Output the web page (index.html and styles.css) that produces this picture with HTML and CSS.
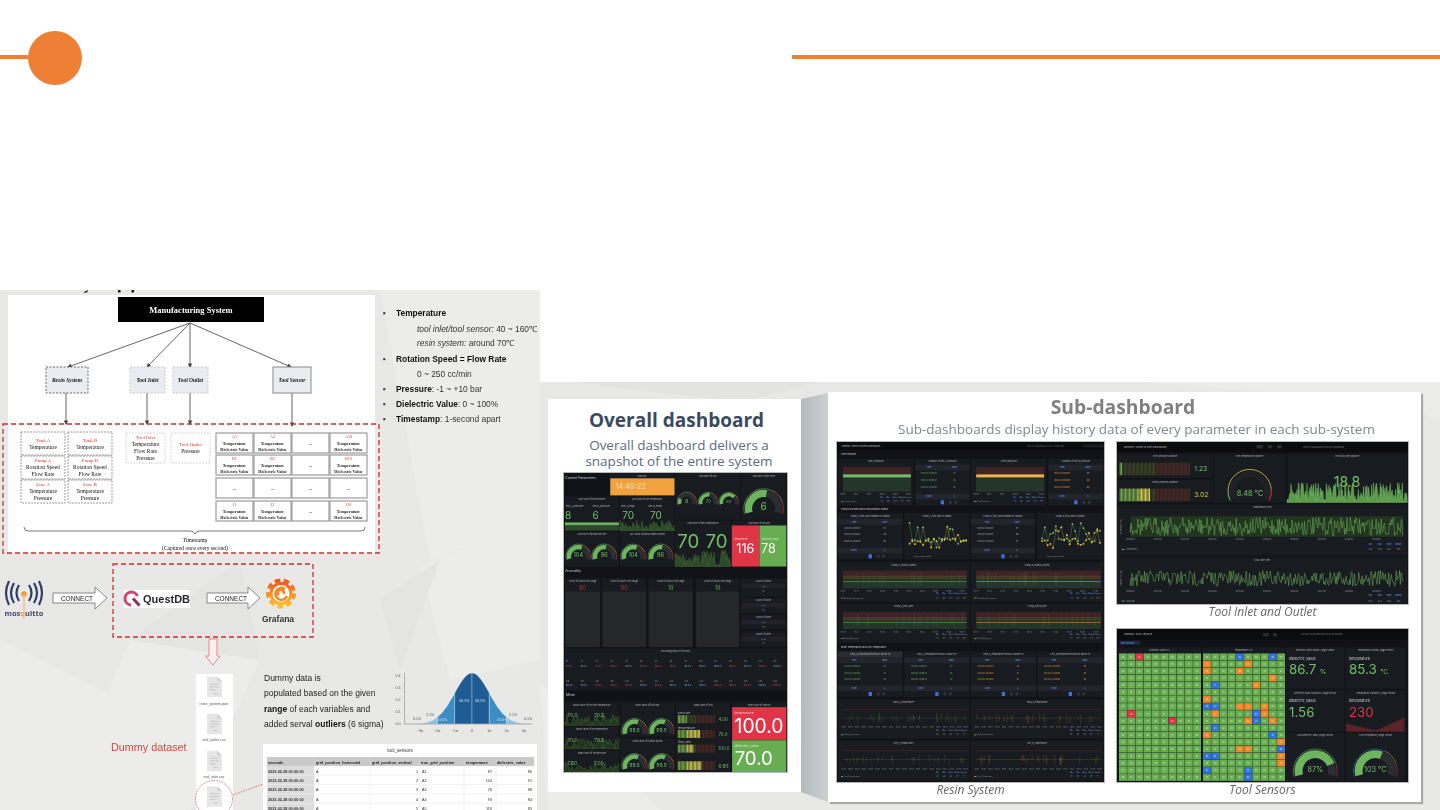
FILE: index.html
```html
<!DOCTYPE html>
<html lang="en">
<head>
  <meta charset="UTF-8">
  <meta name="viewport" content="width=device-width, initial-scale=1.0">
  <title>Dashboards</title>
  <link rel="stylesheet" href="styles.css">
</head>
<body>
  <div class="slide">
    <header class="rule">
      <span class="rule-left"></span>
      <span class="dot"></span>
      <span class="rule-right"></span>
    </header>

    <main class="content">
      <!-- left picture: data flow diagram -->
      <svg class="flow" viewBox="0 284 540 526" xmlns="http://www.w3.org/2000/svg">
        <defs>
          <linearGradient id="grafana" x1="0" y1="1" x2="0" y2="0">
            <stop offset="0" stop-color="#fbc02d"/>
            <stop offset="1" stop-color="#ef5b25"/>
          </linearGradient>
          <marker id="tip" markerWidth="5" markerHeight="5" refX="4" refY="2.5" orient="auto">
            <path d="M0 0 L5 2.5 L0 5z" fill="#444"/>
          </marker>
          <symbol id="file" viewBox="0 0 16 22">
            <path d="M0 0 H11 L16 5 V22 H0z" fill="#e6e6e6"/>
            <path d="M11 0 V5 H16z" fill="#cfcfcf"/>
            <path d="M3 8 H12 M3 11 H13 M3 14 H9 M7 18 H11" stroke="#c4c4c4" stroke-width="1"/>
          </symbol>
        </defs>

        <rect x="0" y="290" width="540" height="520" fill="#e8e8e7"/>
        <g fill="#ececeb">
          <polygon points="380,290 540,290 540,520 430,560"/>
          <polygon points="0,640 120,700 60,810 0,810"/>
          <polygon points="130,640 260,660 190,810 60,810"/>
          <polygon points="420,565 540,520 540,660 450,680"/>
        </g>
        <g fill="#e4e4e3">
          <polygon points="380,600 440,560 400,670"/>
          <polygon points="130,640 240,560 260,660"/>
        </g>

        <!-- bits of the heading above that the picture crops away -->
        <path d="M83 292.500 L88 290 L87 292.500z" fill="#111"/>
        <rect x="118" y="290" width="2.500" height="2.500" fill="#111"/>
        <rect x="131.500" y="290" width="2.500" height="2.500" fill="#111"/>

        <rect x="8" y="295" width="367" height="258" fill="#fff"/>

        <rect x="118" y="297" width="146" height="25" fill="#000"/>
        <text class="serif serif-head" x="191" y="313">Manufacturing System</text>

        <g class="link">
          <line x1="190" y1="323" x2="68" y2="367" marker-end="url(#tip)"/>
          <line x1="190" y1="323" x2="147" y2="367" marker-end="url(#tip)"/>
          <line x1="190" y1="323" x2="190" y2="367" marker-end="url(#tip)"/>
          <line x1="190" y1="323" x2="291" y2="367" marker-end="url(#tip)"/>
          <line x1="66" y1="393" x2="66" y2="424" marker-end="url(#tip)"/>
          <line x1="147" y1="393" x2="147" y2="424" marker-end="url(#tip)"/>
          <line x1="190" y1="393" x2="190" y2="424" marker-end="url(#tip)"/>
          <line x1="292" y1="393" x2="292" y2="426" marker-end="url(#tip)"/>
        </g>

        <rect class="sys sys-dash" x="46" y="367" width="42" height="26"/>
        <rect class="sys sys-soft" x="130" y="367" width="35" height="26"/>
        <rect class="sys sys-soft" x="173" y="367" width="35" height="26"/>
        <rect class="sys sys-solid" x="273" y="367" width="38" height="26"/>
        <text class="serif serif-sys" x="67" y="382">Resin System</text>
        <text class="serif serif-sys" x="147.500" y="382">Tool Inlet</text>
        <text class="serif serif-sys" x="190.500" y="382">Tool Outlet</text>
        <text class="serif serif-sys" x="292" y="382">Tool Sensor</text>

        <g id="resinGrid"></g>
        <g id="toolGrid"></g>
        <g id="sensorGrid"></g>

        <rect class="red-dash" x="3" y="424" width="376" height="129"/>
        <path d="M24 527 Q24 531 28 531 H190 Q194 531 195 534 Q196 531 200 531 H361 Q365 531 365 527" fill="none" stroke="#555" stroke-width="0.8"/>
        <text class="serif serif-cell" x="195" y="542">Timestamp</text>
        <text class="serif serif-cell" x="195" y="550">(Captured once every second)</text>

        <!-- bullets -->
        <g class="bullets">
          <text x="383" y="316">▪</text><text x="396" y="316" class="b">Temperature</text>
          <text x="417" y="332"><tspan class="i">tool inlet/tool sensor:</tspan> 40 ~ 160℃</text>
          <text x="417" y="346"><tspan class="i">resin system:</tspan> around 70℃</text>
          <text x="383" y="362">▪</text><text x="396" y="362" class="b">Rotation Speed = Flow Rate</text>
          <text x="417" y="377">0 ~ 250 cc/min</text>
          <text x="383" y="392">▪</text><text x="396" y="392"><tspan class="b">Pressure</tspan>: -1 ~ +10 bar</text>
          <text x="383" y="407">▪</text><text x="396" y="407"><tspan class="b">Dielectric Value</tspan>: 0 ~ 100%</text>
          <text x="383" y="422">▪</text><text x="396" y="422"><tspan class="b">Timestamp</tspan>: 1-second apart</text>
        </g>

        <!-- broker row -->
        <g class="mq-arcs">
          <path d="M19 585 Q14 593 19 601"/><path d="M14 583 Q8 593 14 603"/><path d="M9 581 Q3 593 9 605"/>
          <path d="M29 585 Q34 593 29 601"/><path d="M34 583 Q40 593 34 603"/><path d="M39 581 Q45 593 39 605"/>
        </g>
        <circle cx="24" cy="594" r="2.800" fill="#f0993e"/>
        <line x1="24" y1="594" x2="24" y2="611" stroke="#f3b57c" stroke-width="1.200"/>
        <text class="mq-text" x="24" y="616">mos<tspan fill="#f0993e">q</tspan>uitto</text>

        <polygon class="arrow" points="53,593 95,593 95,587 107,598 95,609 95,603 53,603"/>
        <text class="connect" x="77" y="601">CONNECT</text>
        <polygon class="arrow" points="207,593 248,593 248,587 260,598 248,609 248,603 207,603"/>
        <text class="connect" x="231" y="601">CONNECT</text>

        <rect class="red-dash" x="113" y="564" width="200" height="73"/>
        <rect x="124" y="590" width="66" height="18" fill="#fff"/>
        <path d="M137.500 596 A6.500 6.500 0 1 0 131 605" fill="none" stroke="#d14671" stroke-width="3"/>
        <path d="M133 598.500 L139.500 605.500" fill="none" stroke="#8a3355" stroke-width="3"/>
        <text class="quest" x="143" y="603">QuestDB</text>

        <!-- grafana mark: toothed ring with a white swirl -->
        <circle cx="281" cy="593.500" r="11.500" fill="url(#grafana)"/>
        <circle class="gear-teeth" cx="281" cy="593.500" r="12.500"/>
        <circle cx="281" cy="593.500" r="8.500" fill="#fff"/>
        <path d="M287 596 A6 6 0 1 1 285 589 M279 595 A3 3 0 1 1 283.500 594" fill="none" stroke="#f58a1f" stroke-width="2.600"/>
        <text class="grafana" x="278" y="622">Grafana</text>

        <polygon class="down" points="209,639 217,639 217,656 220,656 213,665 205.500,656 209,656"/>

        <!-- dummy data -->
        <text class="dataset" x="111" y="751">Dummy dataset</text>

        <rect x="196" y="674" width="37" height="136" fill="#fff"/>
        <use href="#file" x="207" y="676" width="15" height="22"/>
        <use href="#file" x="207" y="713" width="15" height="22"/>
        <use href="#file" x="207" y="750" width="15" height="22"/>
        <use href="#file" x="207" y="786" width="15" height="21"/>
        <g class="file-label">
          <text x="214" y="705">resin_system.json</text>
          <text x="214" y="741">tool_outlet.csv</text>
          <text x="214" y="778">tool_inlet.csv</text>
        </g>
        <circle cx="214" cy="799" r="18.500" class="pick"/>
        <path d="M233 795 L263 784" class="pick"/>

        <g class="note">
          <text x="264" y="681">Dummy data is</text>
          <text x="264" y="696">populated based on the given</text>
          <text x="264" y="712"><tspan class="b">range</tspan> of each variables and</text>
          <text x="264" y="727">added serval <tspan class="b">outliers</tspan> (6 sigma)</text>
        </g>

        <g id="bell"></g>
        <g id="sensorTable"></g>
      </svg>

      <!-- right picture: dashboards -->
      <section class="boards">
        <svg class="boards-bg" viewBox="0 0 900 428" preserveAspectRatio="none">
          <polygon points="0,0 900,0 900,428 0,428" fill="#e8e8e7"/>
          <polygon points="30,0 280,0 200,20" fill="#e3e3e2"/>
          <polygon points="600,0 900,0 900,40 860,20" fill="#ececeb"/>
          <polygon points="0,300 8,428 120,428" fill="#ececeb"/>
        </svg>

        <article class="card card-overall">
          <h2 class="overall-title">Overall dashboard</h2>
          <p class="overall-sub">Overall dashboard delivers a<br>snapshot of the entire system</p>
          <svg id="overall" class="shot shot-overall" viewBox="72 265 670 895" preserveAspectRatio="none"></svg>
        </article>

        <svg class="fold" viewBox="0 0 27 410" preserveAspectRatio="none">
          <defs>
            <linearGradient id="foldFill" x1="0" x2="1">
              <stop offset="0" stop-color="#b3b9bc"/>
              <stop offset="1" stop-color="#ccd0d2"/>
            </linearGradient>
          </defs>
          <polygon points="0,7 27,1 27,410 0,400" fill="url(#foldFill)"/>
        </svg>

        <article class="card card-sub">
          <h2 class="sub-title">Sub-dashboard</h2>
          <p class="sub-text">Sub-dashboards display history data of every parameter in each sub-system</p>
          <div class="sub-grid">
            <figure class="shot-col">
              <svg id="resin" class="shot shot-resin" viewBox="20 170 802 1020" preserveAspectRatio="none"></svg>
              <figcaption>Resin System</figcaption>
            </figure>
            <div class="stack">
              <figure class="shot-col">
                <svg id="inlet" class="shot shot-inlet" viewBox="22 170 873 487" preserveAspectRatio="none"></svg>
                <figcaption>Tool Inlet and Outlet</figcaption>
              </figure>
              <figure class="shot-col">
                <svg id="sensors" class="shot shot-sensors" viewBox="22 733 873 457" preserveAspectRatio="none"></svg>
                <figcaption>Tool Sensors</figcaption>
              </figure>
            </div>
          </div>
        </article>
      </section>
    </main>
  </div>

  <script src="script.js"></script>
</body>
</html>
```

FILE: styles.css
```css
html, body {
  margin: 0;
  padding: 0;
  background: #fff;
}
.slide {
  width: 1440px;
  height: 810px;
  overflow: hidden;
  font-family: 'Open Sans', sans-serif;
}
.rule {
  display: flex;
  align-items: center;
  height: 116px;
}
.rule-left {
  width: 28px;
  height: 4px;
  margin-bottom: 2px;
  background: #ed8034;
}
.dot {
  width: 54px;
  height: 54px;
  border-radius: 50%;
  background: #ed8034;
}
.rule-right {
  width: 648px;
  height: 4px;
  margin-bottom: 2px;
  margin-left: auto;
  background: #ed8034;
}
.content {
  display: grid;
  grid-template-columns: 540px 900px;
  height: 694px;
}

/* left picture */
.flow {
  display: block;
  width: 540px;
  height: 526px;
  margin-top: 168px;
  filter: blur(0.55px);
}
.flow text {
  font-family: 'Liberation Sans', sans-serif;
}
.flow .serif {
  font-family: 'Liberation Serif', serif;
  text-anchor: middle;
}
.serif-head {
  font-size: 8.5px;
  font-weight: bold;
  fill: #fff;
}
.serif-sys {
  font-size: 5.5px;
  font-style: italic;
  font-weight: bold;
  fill: #111;
}
.serif-cell {
  font-size: 5.5px;
  fill: #111;
}
.serif-red {
  font-size: 5px;
  fill: #d9342b;
}
.serif-tiny {
  font-size: 4.2px;
  font-weight: bold;
  fill: #222;
}
.serif-tiny-red {
  font-size: 4.2px;
  fill: #d9342b;
}
.link line {
  stroke: #555;
  stroke-width: 0.9;
}
.sys {
  fill: #e9edf2;
  stroke-width: 1;
}
.sys-dash {
  stroke: #666;
  stroke-dasharray: 2 1.500;
}
.sys-soft {
  stroke: #c5c5c5;
  stroke-dasharray: 2 1.500;
}
.sys-solid {
  stroke: #8a8a8a;
}
.cell-dash {
  fill: #fff;
  stroke: #777;
  stroke-width: 0.8;
  stroke-dasharray: 1.800 1.200;
}
.cell-soft {
  fill: #fff;
  stroke: #c8c8c8;
  stroke-width: 0.8;
  stroke-dasharray: 1.800 1.200;
}
.cell-solid {
  fill: #fff;
  stroke: #9b9b9b;
  stroke-width: 1.200;
}
.red-dash {
  fill: none;
  stroke: #c9302c;
  stroke-width: 1.300;
  stroke-dasharray: 5 3;
}
.bullets text {
  font-size: 8.4px;
  fill: #333;
}
.bullets .b {
  font-weight: bold;
  fill: #111;
}
.bullets .i {
  font-style: italic;
}
.mq-arcs path {
  fill: none;
  stroke: #2f3d63;
  stroke-width: 2.200;
}
.flow .mq-text {
  font-family: 'Open Sans', sans-serif;
  font-size: 7.5px;
  font-weight: bold;
  fill: #3c4a6e;
  text-anchor: middle;
}
.arrow {
  fill: #fff;
  stroke: #7a7a7a;
  stroke-width: 0.9;
}
.connect {
  font-size: 6.5px;
  fill: #222;
  text-anchor: middle;
}
.quest {
  font-size: 11px;
  font-weight: bold;
  fill: #26262e;
}
.gear-teeth {
  fill: none;
  stroke: url(#grafana);
  stroke-width: 5;
  stroke-dasharray: 5.500 3.230;
}
.grafana {
  font-size: 8.5px;
  font-weight: bold;
  fill: #333;
  text-anchor: middle;
}
.down {
  fill: #fbeeee;
  stroke: #e08a85;
  stroke-width: 1;
}
.dataset {
  font-size: 10.8px;
  fill: #d9453f;
}
.file-label text {
  font-size: 3.6px;
  fill: #555;
  text-anchor: middle;
}
.pick {
  fill: none;
  stroke: #d9534f;
  stroke-width: 0.8;
  stroke-dasharray: 1.500 1.200;
}
.note text {
  font-size: 8.5px;
  fill: #222;
}
.note .b {
  font-weight: bold;
  fill: #111;
}
.tb-title {
  font-size: 4.5px;
  fill: #333;
  text-anchor: middle;
}
.tb-head {
  font-size: 3.8px;
  font-weight: bold;
  fill: #222;
}
.tb-cell {
  font-size: 3.8px;
  fill: #333;
}
.tb-date {
  font-size: 3.8px;
  font-weight: bold;
  fill: #333;
}
.tb-num {
  text-anchor: end;
}
.bell-text {
  font-size: 3.6px;
  fill: #555;
  text-anchor: middle;
}
.bell-pct {
  font-size: 3.6px;
  fill: #cfe4f3;
  text-anchor: middle;
}

/* right picture */
.boards {
  position: relative;
  display: flex;
  align-items: flex-start;
  height: 428px;
  margin-top: 266px;
  padding: 10px 0 0 8px;
  box-sizing: border-box;
  filter: blur(0.5px);
}
.boards-bg {
  position: absolute;
  top: 0;
  left: 0;
  width: 100%;
  height: 100%;
}
.card {
  position: relative;
  background: #fff;
  box-sizing: border-box;
}
.card-overall {
  width: 253px;
  height: 393px;
  margin-top: 7px;
  padding: 8px 16px 0 16px;
  text-align: center;
}
.overall-title {
  margin: 0 0 0 4px;
  font-size: 19px;
  line-height: 26px;
  font-weight: bold;
  color: #3b4a5f;
}
.overall-sub {
  margin: 4px -13px 4px -4px;
  font-size: 13.5px;
  line-height: 16px;
  color: #5b6b7d;
}
.fold {
  position: relative;
  width: 27px;
  height: 410px;
  flex: none;
}
.card-sub {
  width: 593px;
  height: 410px;
  padding: 2px 0 0 9px;
  box-shadow: 2px 2px 1px #a9a9a9;
  text-align: center;
}
.sub-title {
  margin: 0 12px 0 0;
  font-size: 19.3px;
  line-height: 25px;
  font-weight: bold;
  color: #808080;
}
.sub-text {
  margin: 0 0 3px 15px;
  font-size: 13.5px;
  line-height: 20px;
  color: #7d8890;
}
.sub-grid {
  display: flex;
  gap: 13px;
}
.stack {
  display: flex;
  flex-direction: column;
  gap: 9px;
}
.shot-col {
  margin: 0;
}
.shot-col figcaption {
  font-size: 12px;
  line-height: 16px;
  font-style: italic;
  color: #666;
}
.shot {
  display: block;
  filter: blur(0.4px);
  outline: 1px solid #b5b5b5;
}
.shot-overall {
  width: 223px;
  height: 299px;
}
.shot-resin {
  width: 267px;
  height: 340px;
}
.shot-inlet {
  width: 291px;
  height: 162px;
}
.shot-sensors {
  width: 291px;
  height: 153px;
}
.shot text {
  font-family: Inter, sans-serif;
}
```

FILE: script.js
```js
// builds the dashboard mock-ups and repeated diagram parts from small data tables
let seed = 7;
function rnd() {
  seed = (seed * 16807) % 2147483647;
  return seed / 2147483647;
}

function box(x, y, w, h, fill, op) {
  return `<rect x="${x}" y="${y}" width="${w}" height="${h}" fill="${fill}"${op ? ` opacity="${op}"` : ''}/>`;
}
function txt(x, y, t, size, fill, anchor, weight) {
  return `<text x="${x}" y="${y}" font-size="${size}" fill="${fill}" text-anchor="${anchor || 'start'}"${weight ? ` font-weight="${weight}"` : ''}>${t}</text>`;
}
function panel(x0, y0, x1, y1, title) {
  let s = box(x0, y0, x1 - x0, y1 - y0, '#181b1f');
  if (title) s += txt((x0 + x1) / 2, y0 + 11, title, 6.5, '#b8b8c4', 'middle');
  return s;
}
function wave(x, y, w, h, step, fill, stroke, width) {
  let d = fill !== 'none' ? `M${x} ${y + h}` : `M${x} ${y + h / 2}`;
  for (let px = x; px <= x + w; px += step) {
    d += ` L${px} ${(y + rnd() * h).toFixed(1)}`;
  }
  if (fill !== 'none') d += ` L${x + w} ${y + h}z`;
  return `<path d="${d}" fill="${fill}" stroke="${stroke}" stroke-width="${width || 1}"/>`;
}
function arc(cx, cy, r, a0, a1, color, width) {
  const rad = a => a * Math.PI / 180;
  const x0 = cx + r * Math.sin(rad(a0)), y0 = cy - r * Math.cos(rad(a0));
  const x1 = cx + r * Math.sin(rad(a1)), y1 = cy - r * Math.cos(rad(a1));
  const big = a1 - a0 > 180 ? 1 : 0;
  return `<path d="M${x0.toFixed(1)} ${y0.toFixed(1)} A${r} ${r} 0 ${big} 1 ${x1.toFixed(1)} ${y1.toFixed(1)}" fill="none" stroke="${color}" stroke-width="${width}"/>`;
}
function gauge(cx, cy, r, val, label, size, colors) {
  const c = colors || ['#73bf69', '#f2a23c', '#e02f44'];
  const end = -105 + 210 * val;
  let s = arc(cx, cy, r, -105, 25, c[0], 1.6);
  s += arc(cx, cy, r, 25, 70, c[1], 1.6);
  s += arc(cx, cy, r, 70, 105, c[2], 1.6);
  s += arc(cx, cy, r * 0.76, -105, 105, '#2b2d31', r * 0.36);
  s += arc(cx, cy, r * 0.76, -105, end, '#6eb35e', r * 0.36);
  s += txt(cx, cy + size * 0.15, label, size, '#73bf69', 'middle');
  return s;
}
function barGauge(x, y, w, h, lit, value, color) {
  let s = '';
  const count = Math.floor(w / 4);
  for (let i = 0; i < count; i++) {
    const t = i / count;
    const on = t < lit;
    let col;
    if (on) col = t < 0.25 ? '#78a84a' : '#d3cc55';
    else col = t < 0.5 ? '#3d4424' : '#4a2a24';
    s += box(x + i * 4, y, 3, h, col);
  }
  if (value) s += txt(x + w + 10, y + h * 0.72, value, h * 0.55, color || '#73bf69');
  return s;
}
function chart(x0, y0, x1, y1, title, color, opts) {
  const o = opts || {};
  let s = panel(x0, y0, x1, y1, title);
  const px = x0 + 16, pw = x1 - x0 - 24, py = y0 + 25, ph = y1 - y0 - 66;
  s += box(px, py, pw, ph * 0.32, '#3d2226');
  if (o.band) s += box(px, py + ph * 0.32, pw, ph * 0.2, '#3f3c23');
  s += box(px, py + (o.band ? ph * 0.52 : ph * 0.32), pw, ph * (o.band ? 0.48 : 0.68), '#24352a');
  if (o.thick) s += box(px, py + ph * 0.3, pw, o.thick, color);
  else {
    s += `<path d="M${px} ${py + ph * 0.32} H${px + pw}" stroke="#7a5a34" stroke-width="0.8"/>`;
    s += `<path d="M${px} ${py + ph * 0.62} H${px + pw}" stroke="${color}" stroke-width="1.4"/>`;
    for (let i = 0; i < pw / 22; i++) {
      const sx = px + rnd() * pw;
      s += `<path d="M${sx.toFixed(1)} ${py + ph * 0.1} V${py + ph * 0.85}" stroke="${color}" stroke-width="0.8" opacity="0.35"/>`;
    }
  }
  const n = Math.floor(pw / 38);
  for (let i = 0; i <= n; i++) {
    s += txt(px + i * pw / n * 0.96, py + ph + 11, `00:0${i % 10}`, 5, '#9a9aa2', 'middle');
  }
  s += box(x0 + 10, y1 - 13, 7, 2, color);
  s += txt(x0 + 20, y1 - 10, title, 5, '#9a9aa2');
  const head = ['Min', 'Max', 'Mean', 'Median', 'Variance'];
  head.forEach((h, i) => {
    const tx = x1 - 96 + i * 20;
    s += txt(tx, y1 - 23, h, 5, '#6e9fff', 'middle');
    s += txt(tx, y1 - 10, (1 + i * 7).toFixed(1), 5, '#9a9aa2', 'middle');
  });
  return s;
}
function table(x0, y0, x1, y1, title, color, hiTitle) {
  let s = panel(x0, y0, x1, y1, title);
  if (hiTitle) s += box(x0, y0, x1 - x0, 18, '#2a2c31') + txt((x0 + x1) / 2, y0 + 11, title, 6.5, '#b8b8c4', 'middle');
  const w = x1 - x0;
  s += box(x0, y0 + 18, w, 17, '#22252b');
  s += txt(x0 + w * 0.25, y0 + 29, 'Time', 6, '#6e9fff', 'middle');
  s += txt(x0 + w * 0.72, y0 + 29, 'Value', 6, '#6e9fff', 'middle');
  [47, 67, 87].forEach(dy => {
    s += txt(x0 + w * 0.1, y0 + dy, '2023-02-28 00:07', 5.5, color);
    s += txt(x0 + w * 0.72, y0 + dy, String(40 + Math.floor(rnd() * 60)), 5.5, color, 'middle');
  });
  s += box(x0, y1 - 35, w, 17, '#22252b');
  s += txt(x0 + w * 0.25, y1 - 24, 'Count', 6, '#6e9fff', 'middle');
  s += txt(x0 + w * 0.72, y1 - 24, '6', 6, '#6e9fff', 'middle');
  const mid = (x0 + x1) / 2;
  s += box(mid - 5, y1 - 15, 10, 12, '#3d71d9');
  s += box(mid + 20, y1 - 13, 8, 8, '#34373c') + box(mid + 36, y1 - 13, 8, 8, '#34373c');
  return s;
}
function scatter(x0, y0, x1, y1, title) {
  let s = panel(x0, y0, x1, y1, title);
  const py = y0 + 30, ph = y1 - y0 - 62;
  s += `<path d="M${x0 + 14} ${py + ph * 0.65} H${x1 - 8}" stroke="#444" stroke-width="1"/>`;
  ['#73bf69', '#e8c53a'].forEach(col => {
    let d = '', dots = '';
    for (let i = 0; i < 22; i++) {
      const px = x0 + 16 + i * (x1 - x0 - 26) / 21;
      const yy = rnd() > 0.45 ? py + rnd() * ph : py + ph * 0.6 + rnd() * ph * 0.12;
      d += `${i ? 'L' : 'M'}${px.toFixed(1)} ${yy.toFixed(1)} `;
      dots += `<circle cx="${px.toFixed(1)}" cy="${yy.toFixed(1)}" r="2.800" fill="${col}"/>`;
    }
    s += `<path d="${d}" fill="none" stroke="${col}" stroke-width="0.9"/>` + dots;
  });
  s += txt(x0 + 30, y1 - 8, 'pump_rotation_speed', 5, '#9a9aa2');
  return s;
}

/* ---- overall dashboard ---- */
function drawOverall() {
  let s = box(72, 265, 670, 895, '#111217');
  s += txt(76, 282, 'Current Parameters', 10, '#ccccdc');
  s += panel(209, 265, 404, 333, 'Indicator');
  s += box(211, 281, 193, 51, '#f2a23c');
  s += txt(272, 314, '14:49:23', 22, '#f8e2bd', 'middle');
  s += panel(406, 265, 602, 405, 'Last value of tool');
  s += gauge(441, 352, 29, 0.2, '8', 14);
  s += gauge(505, 352, 29, 0.55, '70', 13);
  s += gauge(567, 352, 29, 0.72, '107', 11);
  s += panel(604, 265, 740, 405, 'Last value of pressure');
  s += gauge(672, 372, 60, 0.55, '6', 30);

  s += panel(75, 335, 237, 438, 'Last value of line pressure');
  s += txt(78, 366, 'line_A_pressure', 7, '#b8b8c4') + txt(158, 366, 'line_B_pressure', 7, '#b8b8c4');
  s += txt(75, 402, '8', 30, '#73bf69') + txt(158, 402, '6', 30, '#73bf69');
  s += box(75, 413, 162, 9, '#6eb35e') + box(75, 422, 162, 15, '#2f4a2a');
  s += panel(240, 335, 404, 438, 'Last value of line temperature');
  s += txt(244, 366, 'line_A_temp', 7, '#b8b8c4') + txt(326, 366, 'line_B_temp', 7, '#b8b8c4');
  s += wave(240, 405, 164, 33, 3, '#2f4a2a', '#4f8a3d');
  s += txt(265, 402, '70', 30, '#73bf69', 'middle') + txt(348, 402, '70', 30, '#73bf69', 'middle');

  s += panel(75, 441, 237, 545, 'Last value of pump flow rate');
  s += gauge(115, 515, 37, 0.6, '104', 17) + gauge(193, 515, 37, 0.55, '96', 17);
  s += panel(240, 441, 404, 545, 'Last value of pump rotation speed');
  s += gauge(280, 515, 37, 0.6, '104', 17) + gauge(362, 515, 37, 0.55, '96', 17);

  s += panel(406, 407, 573, 545, 'Last value of tank temperature');
  s += wave(406, 495, 167, 50, 3, '#2f4a2a', '#4f8a3d');
  s += txt(445, 490, '70', 56, '#73bf69', 'middle') + txt(530, 490, '70', 56, '#73bf69', 'middle');
  s += panel(576, 407, 740, 422, 'Last value of sensors');
  s += box(576, 422, 83, 123, '#df3547') + box(659, 422, 81, 123, '#68ad52');
  s += txt(617, 503, '116', 38, '#fff', 'middle') + txt(686, 503, '78', 38, '#fff', 'middle');
  s += txt(584, 466, 'temperature', 7, '#f5c9cd') + txt(666, 466, 'dielectric_value', 7, '#d6ebd0');

  s += txt(76, 562, 'Anomality', 10, '#ccccdc');
  [[75, 182, '80', '#a33a3f'], [186, 320, '80', '#a33a3f'], [325, 460, '19', '#5f9d52'], [467, 600, '19', '#5f9d52']].forEach(p => {
    s += panel(p[0], 580, p[1], 786, 'Count of values over range');
    s += txt((p[0] + p[1]) / 2, 615, p[2], 17, p[3], 'middle');
    s += box(p[0] + 2, 620, p[1] - p[0] - 4, 166, '#262729');
  });
  [[580, 636], [638, 685], [688, 733], [738, 785]].forEach(r => {
    s += panel(603, r[0], 740, r[1], 'Count of outlier');
    s += box(606, r[0] + 16, 131, 14, '#202228');
    s += txt(671, r[0] + 26, 'count', 5, '#6e9fff', 'middle') + txt(671, r[0] + 40, '100', 5, '#9a9aa2', 'middle');
  });

  s += panel(75, 790, 740, 915, 'Recording values of sensors');
  [[830, 845], [890, 904]].forEach((r, ri) => {
    for (let i = 0; i < 15; i++) {
      const tx = 78 + i * 44.5;
      const col = rnd() > 0.5 ? '#8ab8ff' : '#cf5a66';
      s += txt(tx, r[0], `A${i + 1 + ri * 15}`, 5.5, '#9a9aa2');
      s += txt(tx, r[1], `${90 + i}.0 C`, 6.5, col);
    }
  });

  s += txt(78, 934, 'Mean', 10, '#ccccdc');
  [[950, 1022, 'Mean value of Tool inlet temperature', '70.0', '70.8'], [1024, 1092, 'Mean value of line temperature', '70.0', '70.8'], [1094, 1160, 'Mean value of line pressure', '7.80', '7.00']].forEach(r => {
    s += panel(75, r[0], 237, r[1], r[2]);
    s += wave(75, r[0] + 36, 162, r[1] - r[0] - 38, 3, '#23341f', '#4f8a3d');
    s += txt(82, r[0] + 45, r[3], 15, '#73bf69') + txt(162, r[0] + 45, r[4], 15, '#73bf69');
  });
  s += panel(240, 950, 405, 1055, 'Mean value of flow rate');
  s += gauge(284, 1038, 38, 0.6, '99.5', 15) + gauge(365, 1038, 38, 0.6, '99.5', 15);
  s += panel(240, 1058, 405, 1160, 'Mean value of rotation speed');
  s += gauge(284, 1143, 38, 0.6, '99.5', 15) + gauge(365, 1143, 38, 0.6, '99.5', 15);

  s += panel(408, 950, 573, 1160, 'Mean value of tool');
  s += txt(414, 986, 'pressure', 9, '#b8b8c4') + barGauge(414, 990, 112, 24, 0.22, '4.00');
  s += txt(414, 1030, 'temperature', 9, '#b8b8c4') + barGauge(414, 1034, 112, 24, 0.6, '70.0');
  s += txt(414, 1074, 'flow_rate', 9, '#b8b8c4') + barGauge(414, 1078, 112, 24, 0.4, '100.0');
  s += barGauge(414, 1128, 112, 26, 0.62, '6.90');
  s += panel(577, 950, 740, 966, 'Mean value of sensors');
  s += box(577, 966, 163, 98, '#df3547') + box(577, 1065, 163, 95, '#68ad52');
  s += txt(584, 986, 'temperature', 10, '#f5c9cd') + txt(584, 1084, 'dielectric_value', 10, '#d6ebd0');
  s += txt(658, 1044, '100.0', 58, '#fff', 'middle') + txt(642, 1138, '70.0', 56, '#fff', 'middle');
  document.getElementById('overall').innerHTML = s;
}

/* ---- resin system ---- */
function drawResin() {
  let s = box(20, 170, 802, 1020, '#111217');
  s += box(20, 170, 802, 24, '#0b0c0e');
  s += txt(34, 186, 'General / Resin System Dashboard', 7, '#b8b8c4');
  s += txt(590, 186, '2023-02-28 00:00:00 to 2023-02-28 00:20:00', 5, '#777');
  s += box(760, 178, 60, 8, '#1d1f24');
  s += txt(32, 210, 'Line Pressure', 7, '#ccccdc');
  s += chart(22, 220, 250, 360, 'Line A pressure', '#73bf69', { thick: 9 });
  s += table(255, 220, 418, 360, 'Anomaly of line_A_pressure', '#73bf69');
  s += chart(422, 220, 650, 360, 'Line B pressure', '#f2b04c', { thick: 9 });
  s += table(655, 220, 820, 360, 'Anomaly of line_B_pressure', '#f2a23c');

  s += txt(32, 373, 'Pump Flow Rate and Pump Rotation Speed', 7, '#ccccdc');
  s += table(22, 383, 218, 522, 'Pump_A_flow_rate compare to rotation', '#b8b8c4');
  s += scatter(222, 383, 418, 522, 'Pump_A_flow_rate vs speed');
  s += table(422, 383, 615, 522, 'Pump_B_flow_rate compare to rotation', '#b8b8c4');
  s += scatter(620, 383, 820, 522, 'Pump_B_flow_rate vs speed');

  s += chart(22, 530, 418, 650, 'Pump_A_rotation_speed', '#73bf69', { band: true });
  s += chart(422, 530, 820, 650, 'Pump_B_rotation_speed', '#f2b04c', { band: true });
  s += chart(22, 655, 418, 772, 'Pump_A_flow_rate', '#73bf69', { band: true });
  s += chart(422, 655, 820, 772, 'Pump_B_flow_rate', '#f2b04c', { band: true });

  s += txt(32, 789, 'Resin Temperature and Line Temperature', 7, '#ccccdc');
  s += table(22, 798, 218, 935, 'Tank_A_temperature below or above 70', '#73bf69', true);
  s += table(222, 798, 418, 935, 'Line_A_temperature below or above 70', '#73bf69');
  s += table(422, 798, 618, 935, 'Tank_B_temperature below or above 70', '#f2a23c');
  s += table(622, 798, 820, 935, 'Line_B_temperature below or above 70', '#f2a23c');

  function spiky(x0, y0, x1, y1, title, color) {
    let c = panel(x0, y0, x1, y1, title);
    const py = y0 + 30, ph = y1 - y0 - 70;
    c += `<path d="M${x0 + 16} ${py} H${x1 - 6}" stroke="#c4283a" stroke-width="1" stroke-dasharray="3 1"/>`;
    c += `<path d="M${x0 + 16} ${py + ph * 0.55} H${x1 - 6}" stroke="${color}" stroke-width="1" opacity="0.6"/>`;
    for (let i = 0; i < 26; i++) {
      const sx = x0 + 18 + rnd() * (x1 - x0 - 26);
      c += `<path d="M${sx.toFixed(1)} ${py + ph * (0.25 + rnd() * 0.25)} V${py + ph * (0.6 + rnd() * 0.3)}" stroke="${color}" stroke-width="1" opacity="0.6"/>`;
    }
    for (let i = 0; i <= 18; i++) c += txt(x0 + 18 + i * (x1 - x0 - 30) / 18, y1 - 32, '00:01', 5, '#9a9aa2', 'middle');
    c += box(x0 + 10, y1 - 13, 7, 3, color) + txt(x0 + 20, y1 - 10, title, 5, '#9a9aa2');
    ['Min', 'Max', 'Mean', 'Median', 'Variance'].forEach((h, i) => {
      c += txt(x1 - 96 + i * 20, y1 - 22, h, 5, '#6e9fff', 'middle');
      c += txt(x1 - 96 + i * 20, y1 - 10, String(60 + i * 3), 5, '#9a9aa2', 'middle');
    });
    return c;
  }
  s += spiky(22, 942, 418, 1060, 'Tank_A_temperature', '#5f9d52');
  s += spiky(422, 942, 820, 1060, 'Tank_B_temperature', '#b98a3c');
  s += spiky(22, 1065, 418, 1185, 'Line_A_temperature', '#5f9d52');
  s += spiky(422, 1065, 820, 1185, 'Line_B_temperature', '#b98a3c');
  document.getElementById('resin').innerHTML = s;
}

/* ---- tool inlet and outlet ---- */
function drawInlet() {
  let s = box(22, 170, 873, 487, '#111217');
  s += box(22, 170, 873, 30, '#0b0c0e');
  s += txt(42, 188, 'General / Outlet &amp; Inlet Dashboard', 8, '#b8b8c4');
  s += txt(580, 188, '2023-02-28 00:00:00 to 2023-02-28 00:09:59', 5.5, '#888');
  s += box(440, 179, 20, 10, '#2a2c31') + box(474, 179, 14, 10, '#2a2c31') + box(502, 179, 14, 10, '#2a2c31');
  s += panel(22, 205, 310, 278, 'Inlet_pressure_variance');
  s += barGauge(30, 232, 215, 38, 0.02, '');
  s += txt(254, 258, '1.23', 20, '#73bf69');
  s += panel(22, 283, 310, 352, 'Outlet_pressure_variance');
  s += barGauge(30, 310, 215, 38, 0.42, '');
  s += txt(254, 336, '3.02', 20, '#d3cc55');
  s += panel(312, 205, 528, 352, 'Inlet_temperature_variance');
  s += arc(420, 318, 65, -115, -85, '#73bf69', 3) + arc(420, 318, 65, -85, 85, '#b8a33a', 3) + arc(420, 318, 65, 85, 115, '#e02f44', 3);
  s += arc(420, 318, 52, -115, 115, '#1f2125', 18);
  s += txt(421, 332, '8.48 °C', 22, '#73bf69', 'middle');
  s += panel(532, 205, 893, 352, 'Inlet_flow_rate_variance');
  s += wave(532, 292, 361, 60, 2, '#5b9a4a', '#7fca6f', 1.2);
  s += txt(712, 304, '18.8', 42, '#73bf69', 'middle');

  s += panel(22, 358, 893, 512, 'Temperature_Inlet');
  s += box(62, 393, 818, 62, '#22351f');
  s += wave(62, 396, 818, 56, 2.5, 'none', '#6cae5a', 1.6);
  s += panel(22, 516, 893, 657, 'Flow_Rate_Inlet');
  s += wave(62, 556, 818, 48, 2.5, 'none', '#6cae5a', 1.6);
  [[465, 495, 479, 'temperature'], [621, 650, 634, 'Flow_rate']].forEach(r => {
    for (let i = 0; i < 10; i++) s += txt(62 + i * 82, r[0], `00:0${i}:00`, 5.5, '#9a9aa2', 'middle');
    s += box(36, r[1] - 3, 9, 2.5, '#73bf69') + txt(50, r[1], r[3], 5.5, '#9a9aa2');
    ['Min', 'Max', 'Mean', 'Median'].forEach((h, i) => {
      s += txt(782 + i * 28, r[2], h, 5.5, '#6e9fff', 'middle');
      s += txt(782 + i * 28, r[1], (40 + i * 12).toFixed(1), 5.5, '#9a9aa2', 'middle');
    });
  });
  s += `<text transform="translate(36 425) rotate(-90)" font-size="5.5" fill="#9a9aa2" text-anchor="middle">Temperature (°C)</text>`;
  s += `<text transform="translate(36 580) rotate(-90)" font-size="5.5" fill="#9a9aa2" text-anchor="middle">Flow rate (cc/min)</text>`;
  document.getElementById('inlet').innerHTML = s;
}

/* ---- tool sensors ---- */
const BLUE_CELLS = [[4,0],[8,0],[1,4],[0,7],[1,7],[6,8],[6,9],[1,10],[8,11],[9,13],[0,14],[1,14],[0,16],[5,16],[5,17]];
const ORANGE_CELLS = [[0,1],[5,1],[0,2],[4,2],[8,3],[6,4],[0,6],[4,7],[5,7],[7,7],[1,8],[7,8],[5,9],[8,9],[0,11],[9,12],[4,13],[5,13],[9,14],[9,15]];
const RED_CELLS = [[2,0],[1,8],[6,9]];

function heat(x0, title, special) {
  let s = panel(x0, 788, x0 + 248, 1188, title);
  for (let r = 0; r < 18; r++) {
    for (let c = 0; c < 10; c++) {
      const hit = special.find(sp => sp.list.some(p => p[0] === c && p[1] === r));
      const x = x0 + 2 + c * 24.7, y = 806 + r * 21.2;
      s += box(x, y, 23.7, 20.2, hit ? hit.color : '#68ad52');
      s += txt(x + 11.8, y + 13, String(70 + (r * 7 + c * 3) % 30), 6, '#d9ecd3', 'middle');
    }
  }
  return s;
}
function drawSensors() {
  let s = box(22, 733, 873, 457, '#111217');
  s += box(22, 733, 873, 32, '#0b0c0e');
  s += txt(42, 752, 'General / Tool Sensors', 8, '#b8b8c4');
  s += txt(575, 752, '2023-02-28 00:00:00 to 2023-02-28 00:09:59', 5.5, '#888');
  s += box(460, 745, 18, 10, '#2a2c31') + box(490, 745, 12, 10, '#2a2c31');
  s += box(30, 768, 60, 12, '#1e2a44') + txt(33, 777, 'Select Sensor', 6, '#6e9fff');
  s += heat(26, 'Dielectric Value (%)', [{ list: RED_CELLS, color: '#df3547' }]);
  s += heat(278, 'Temperature (°C)', [{ list: BLUE_CELLS, color: '#3274d9' }, { list: ORANGE_CELLS, color: '#e98a2b' }]);

  s += panel(528, 788, 705, 912, 'Dielectric Value (Mean)_Single sensor');
  s += txt(538, 825, 'dielectric_value', 11, '#ccccdc');
  s += txt(538, 868, '86.7', 40, '#73bf69') + txt(630, 868, '%', 20, '#73bf69');
  s += panel(708, 788, 888, 912, 'Temperature (Mean)_Single sensor');
  s += txt(718, 825, 'temperature', 11, '#ccccdc');
  s += txt(718, 868, '85.3', 40, '#73bf69') + txt(812, 868, '°C', 20, '#73bf69');
  s += panel(528, 915, 705, 1040, 'Dielectric Value (Variance)_Single sensor');
  s += txt(538, 952, 'dielectric_value', 11, '#ccccdc');
  s += txt(538, 996, '1.56', 40, '#73bf69');
  s += panel(708, 915, 888, 1040, 'Temperature (Variance)_Single sensor');
  s += txt(718, 952, 'temperature', 11, '#ccccdc');
  s += `<polygon points="710,1040 710,1015 798,1036 884,998 884,1040" fill="#5a2229"/>`;
  s += txt(718, 996, '230', 40, '#df3547');
  s += panel(528, 1043, 705, 1188, 'Last Dielectric Value_Single Sensor');
  s += gauge(617, 1157, 66, 0.82, '87%', 22, ['#73bf69', '#73bf69', '#e02f44']);
  s += panel(708, 1043, 888, 1188, 'Last Temperature_Single Sensor');
  s += gauge(797, 1157, 66, 0.6, '103 °C', 22, ['#3274d9', '#d3b43a', '#e02f44']);
  document.getElementById('sensors').innerHTML = s;
}

/* ---- diagram cells ---- */
function cell(x, y, w, h, cls, head, lines, headCls, lineCls) {
  let s = `<rect class="${cls}" x="${x}" y="${y}" width="${w}" height="${h}"/>`;
  const rows = (head ? 1 : 0) + lines.length;
  let ty = y + h / 2 - (rows - 1) * 3.4 + 1.6;
  if (head) {
    s += `<text class="serif ${headCls}" x="${x + w / 2}" y="${ty}">${head}</text>`;
    ty += 6.8;
  }
  lines.forEach(l => {
    s += `<text class="serif ${lineCls}" x="${x + w / 2}" y="${ty}">${l}</text>`;
    ty += 6.8;
  });
  return s;
}
function drawDiagram() {
  const resin = [
    [21, 432, 'Tank A', ['Temperature']], [68, 432, 'Tank B', ['Temperature']],
    [21, 456, 'Pump A', ['Rotation Speed', 'Flow Rate']], [68, 456, 'Pump B', ['Rotation Speed', 'Flow Rate']],
    [21, 480, 'Line A', ['Temperature', 'Pressure']], [68, 480, 'Line B', ['Temperature', 'Pressure']]
  ];
  document.getElementById('resinGrid').innerHTML = resin.map(c =>
    cell(c[0], c[1], 44, 23, 'cell-dash', c[2], c[3], 'serif-red', 'serif-cell')).join('');

  document.getElementById('toolGrid').innerHTML =
    cell(126, 433, 39, 30, 'cell-soft', 'Tool Inlet', ['Temperature', 'Flow Rate', 'Pressure'], 'serif-red', 'serif-cell') +
    cell(171, 433, 39, 30, 'cell-soft', 'Tool Outlet', ['Pressure'], 'serif-red', 'serif-cell');

  const cols = [[216, 'A'], [254, 'B'], [292, ''], [330, 'Z']];
  const rows = [433, 455, 478, 501];
  let g = '';
  rows.forEach((y, r) => {
    cols.forEach((c, i) => {
      const empty = r === 2 || i === 2;
      if (empty) g += cell(c[0], y, 37, 20, 'cell-solid', '', ['...'], '', 'serif-tiny');
      else {
        const num = ['1', '2', '', '10'][i];
        const head = (r === 3 ? 'J' : r === 1 ? 'B' : 'A') + num;
        g += cell(c[0], y, 37, 20, 'cell-solid', head, ['Temperature', 'Dielectric Value'], 'serif-tiny-red', 'serif-tiny');
      }
    });
  });
  document.getElementById('sensorGrid').innerHTML = g;
}

/* ---- normal distribution ---- */
function drawBell() {
  const cx = 472, sg = 17.3, base = 724, top = 51;
  const fy = z => base - top * Math.exp(-z * z / 2);
  const bands = [[-3, -2, '#8fc1e0'], [-2, -1, '#3b8dc4'], [-1, 0, '#1f5c94'], [0, 1, '#1f5c94'], [1, 2, '#3b8dc4'], [2, 3, '#8fc1e0']];
  let s = '';
  bands.forEach(b => {
    let d = `M${cx + b[0] * sg} ${base}`;
    for (let z = b[0]; z <= b[1] + 0.001; z += 0.1) d += ` L${(cx + z * sg).toFixed(1)} ${fy(z).toFixed(1)}`;
    d += ` L${cx + b[1] * sg} ${base}z`;
    s += `<path d="${d}" fill="${b[2]}" stroke="#fff" stroke-width="0.3"/>`;
  });
  s += `<path d="M404.500 673 V724 H532" fill="none" stroke="#888" stroke-width="0.6"/>`;
  ['0.4', '0.3', '0.2', '0.1', '0.0'].forEach((t, i) => {
    s += `<text class="bell-text" x="398" y="${677 + i * 12}">${t}</text>`;
  });
  ['−3σ', '−2σ', '−1σ', '0', '1σ', '2σ', '3σ'].forEach((t, i) => {
    s += `<text class="bell-text" x="${cx + (i - 3) * sg}" y="732">${t}</text>`;
  });
  s += `<text class="bell-pct" x="464" y="702">34.1%</text><text class="bell-pct" x="480" y="702">34.1%</text>`;
  s += `<text class="bell-pct" x="442" y="721">13.6%</text><text class="bell-pct" x="502" y="721">13.6%</text>`;
  s += `<text class="bell-text" x="417" y="720">0.1%</text><text class="bell-text" x="430" y="716">2.1%</text>`;
  s += `<text class="bell-text" x="513" y="716">2.1%</text><text class="bell-text" x="528" y="720">0.1%</text>`;
  document.getElementById('bell').innerHTML = s;
}

/* ---- sensor table ---- */
function drawTable() {
  const rows = [[1, 'A1', 87, 86], [2, 'A2', 103, 91], [3, 'A3', 76, 88], [4, 'A4', 93, 84], [5, 'A5', 116, 85]];
  let s = `<rect x="263" y="744" width="274" height="66" fill="#fff"/>`;
  s += `<text class="tb-title" x="400" y="752">tool_sensors</text>`;
  s += `<rect x="267" y="757" width="267" height="9" fill="#c9c9c9"/>`;
  const head = [['seconds', 268], ['grid_position_horizontal', 316], ['grid_position_vertical', 372], ['true_grid_position', 421], ['temperature', 466], ['dielectric_value', 497]];
  head.forEach(h => { s += `<text class="tb-head" x="${h[1]}" y="763.500">${h[0]}</text>`; });
  rows.forEach((r, i) => {
    const y = 766 + i * 9.400;
    s += `<rect x="267" y="${y}" width="47" height="9" fill="#dcdcdc"/>`;
    s += `<path d="M267 ${y + 9.2} H534" stroke="#ddd" stroke-width="0.4"/>`;
    s += `<text class="tb-date" x="268" y="${y + 6.500}">2023-02-28 00:00:00</text>`;
    s += `<text class="tb-cell" x="316" y="${y + 6.500}">A</text>`;
    s += `<text class="tb-cell tb-num" x="418" y="${y + 6.500}">${r[0]}</text>`;
    s += `<text class="tb-cell" x="422" y="${y + 6.500}">${r[1]}</text>`;
    s += `<text class="tb-cell tb-num" x="492" y="${y + 6.500}">${r[2]}</text>`;
    s += `<text class="tb-cell tb-num" x="532" y="${y + 6.500}">${r[3]}</text>`;
  });
  [314, 370, 420, 464, 496].forEach(x => {
    s += `<path d="M${x} 757 V810" stroke="#ddd" stroke-width="0.4"/>`;
  });
  document.getElementById('sensorTable').innerHTML = s;
}

drawOverall();
drawResin();
drawInlet();
drawSensors();
drawDiagram();
drawBell();
drawTable();
```
